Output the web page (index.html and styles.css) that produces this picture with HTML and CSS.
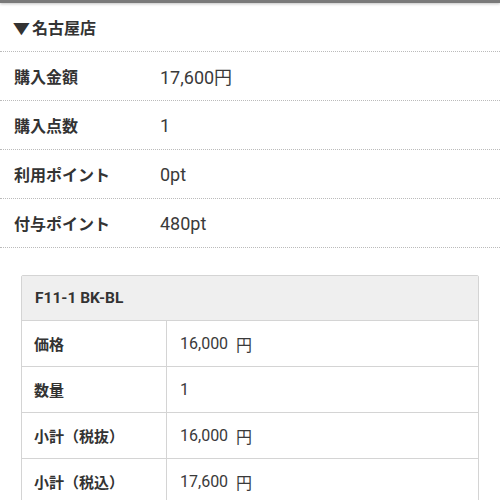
FILE: index.html
```html
<!DOCTYPE html>
<html lang="ja">
<head>
<meta charset="utf-8">
<link rel="stylesheet" href="styles.css">
</head>
<body>
<div class="topbar"></div>
<div class="shop"><span class="tri">▼</span>名古屋店</div>
<div class="summary">
  <div class="row"><span class="label">購入金額</span><span class="value">17,600円</span></div>
  <div class="row"><span class="label">購入点数</span><span class="value">1</span></div>
  <div class="row"><span class="label">利用ポイント</span><span class="value">0pt</span></div>
  <div class="row"><span class="label">付与ポイント</span><span class="value">480pt</span></div>
</div>
<div class="card">
  <div class="card-head">F11-1 BK-BL</div>
  <div class="item"><div class="th">価格</div><div class="td">16,000<span class="yen">円</span></div></div>
  <div class="item"><div class="th">数量</div><div class="td">1</div></div>
  <div class="item"><div class="th">小計（税抜）</div><div class="td">16,000<span class="yen">円</span></div></div>
  <div class="item"><div class="th">小計（税込）</div><div class="td">17,600<span class="yen">円</span></div></div>
</div>
</body>
</html>
```
FILE: styles.css
```css
html, body {
  margin: 0;
  padding: 0;
  background: #fff;
  color: #333;
  font-family: "Roboto", "Noto Sans CJK JP", sans-serif;
  overflow: hidden;
}
.topbar {
  height: 3px;
  background: #7a7a7a;
  box-shadow: 0 1px 3px rgba(0,0,0,0.25);
}
.shop {
  height: 48px;
  display: flex;
  align-items: center;
  padding-left: 14px;
  font-weight: bold;
  font-size: 16px;
  border-bottom: 1px dotted #bbb;
}
.tri {
  font-size: 15px;
  margin-right: 3px;
  transform: scaleX(1.15);
  display: inline-block;
}
.row {
  height: 48px;
  display: flex;
  align-items: center;
  border-bottom: 1px dotted #bbb;
}
.label {
  width: 146px;
  padding-left: 14px;
  font-weight: bold;
  font-size: 16px;
}
.value {
  font-size: 18px;
  color: #3a3a3a;
}
.card {
  margin: 27px 21px 0 21px;
  border: 1px solid #d4d4d4;
  border-radius: 2px;
}
.card-head {
  height: 44px;
  display: flex;
  align-items: center;
  padding-left: 13px;
  background: #efefef;
  font-weight: bold;
  font-size: 15.5px;
  border-bottom: 1px solid #d4d4d4;
}
.item {
  display: flex;
  height: 45px;
  border-bottom: 1px solid #d4d4d4;
}
.th {
  width: 132px;
  padding-left: 12px;
  display: flex;
  align-items: center;
  font-weight: bold;
  font-size: 15px;
  border-right: 1px solid #d4d4d4;
}
.td {
  display: flex;
  align-items: center;
  padding-left: 13px;
  font-size: 16px;
  color: #3a3a3a;
}
.yen {
  margin-left: 8px;
}
```
